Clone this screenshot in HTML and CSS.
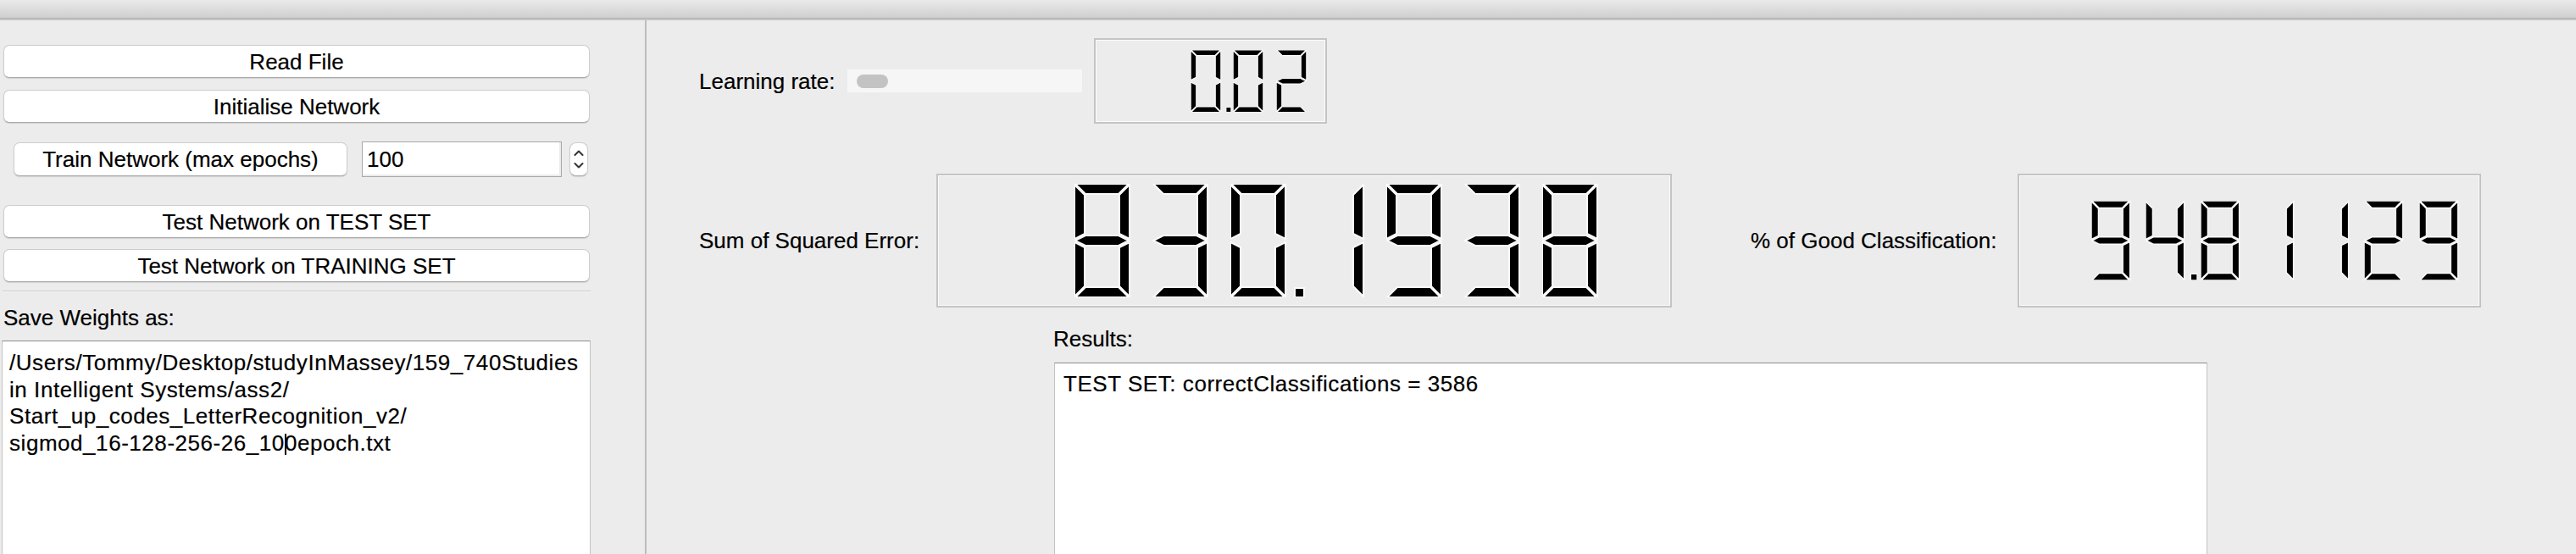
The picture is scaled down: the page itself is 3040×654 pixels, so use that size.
FILE: index.html
```html
<!DOCTYPE html>
<html>
<head>
<meta charset="utf-8">
<link rel="stylesheet" href="styles.css">
</head>
<body>
<svg class="defs" width="0" height="0" aria-hidden="true">
  <defs>
    <polygon id="sa" class="seg" points="1,0 64,0 52,12 13,12"/>
    <polygon id="sb" class="seg" points="65,1 65,65 53,59 53,13"/>
    <polygon id="sc" class="seg" points="65,69 65,133 53,121 53,75"/>
    <polygon id="sd" class="seg" points="1,134 64,134 52,122 13,122"/>
    <polygon id="se" class="seg" points="0,69 12,75 12,121 0,133"/>
    <polygon id="sf" class="seg" points="0,1 12,13 12,59 0,65"/>
    <polygon id="sg" class="seg" points="1,67 13,61 52,61 64,67 52,73 13,73"/>
    <rect id="dp" class="seg" x="76" y="123" width="11" height="11"/>
    <g id="d0"><use href="#sa"/><use href="#sb"/><use href="#sc"/><use href="#sd"/><use href="#se"/><use href="#sf"/></g>
    <g id="d1"><use href="#sb"/><use href="#sc"/></g>
    <g id="d2"><use href="#sa"/><use href="#sb"/><use href="#sg"/><use href="#se"/><use href="#sd"/></g>
    <g id="d3"><use href="#sa"/><use href="#sb"/><use href="#sg"/><use href="#sc"/><use href="#sd"/></g>
    <g id="d4"><use href="#sf"/><use href="#sg"/><use href="#sb"/><use href="#sc"/></g>
    <g id="d8"><use href="#sa"/><use href="#sb"/><use href="#sc"/><use href="#sd"/><use href="#se"/><use href="#sf"/><use href="#sg"/></g>
    <g id="d9"><use href="#sa"/><use href="#sb"/><use href="#sc"/><use href="#sd"/><use href="#sf"/><use href="#sg"/></g>
  </defs>
</svg>

<div class="titlebar"></div>

<div class="main">
  <div class="left">
    <button class="btn btn-wide">Read File</button>
    <button class="btn btn-wide btn-gap">Initialise Network</button>
    <div class="train-row">
      <button class="btn btn-train">Train Network (max epochs)</button>
      <div class="spin-input">100</div>
      <div class="spinner">
        <svg viewBox="0 0 22 40" class="spin-icon">
          <polyline points="6,14.5 11,9.5 16,14.5"/>
          <polyline points="6,25.5 11,30.5 16,25.5"/>
        </svg>
      </div>
    </div>
    <button class="btn btn-wide btn-test">Test Network on TEST SET</button>
    <button class="btn btn-wide btn-gap2">Test Network on TRAINING SET</button>
    <div class="sep"></div>
    <div class="label save-label">Save Weights as:</div>
    <div class="textbox path-box">/Users/Tommy/Desktop/studyInMassey/159_740Studies<br>in Intelligent Systems/ass2/<br>Start_up_codes_LetterRecognition_v2/<br>sigmod_16-128-256-26_10<span class="caret"></span>0epoch.txt</div>
  </div>

  <div class="right">
    <div class="row row-lr">
      <div class="label lbl-lr">Learning rate:</div>
      <div class="slider"><div class="handle"></div></div>
      <div class="lcd lcd-small">
        <svg class="cell" viewBox="0 0 92 134"><use href="#d0"/><use href="#dp"/></svg>
        <svg class="cell" viewBox="0 0 92 134"><use href="#d0"/></svg>
        <svg class="cell" viewBox="0 0 92 134"><use href="#d2"/></svg>
      </div>
    </div>

    <div class="row row-stats">
      <div class="label lbl-sse">Sum of Squared Error:</div>
      <div class="lcd lcd-big">
        <svg class="cell" viewBox="0 0 92 134"><use href="#d8"/></svg>
        <svg class="cell" viewBox="0 0 92 134"><use href="#d3"/></svg>
        <svg class="cell" viewBox="0 0 92 134"><use href="#d0"/><use href="#dp"/></svg>
        <svg class="cell" viewBox="0 0 92 134"><use href="#d1"/></svg>
        <svg class="cell" viewBox="0 0 92 134"><use href="#d9"/></svg>
        <svg class="cell" viewBox="0 0 92 134"><use href="#d3"/></svg>
        <svg class="cell" viewBox="0 0 92 134"><use href="#d8"/></svg>
      </div>
      <div class="label lbl-pct">% of Good Classification:</div>
      <div class="lcd lcd-mid">
        <svg class="cell" viewBox="0 0 92 134"><use href="#d9"/></svg>
        <svg class="cell" viewBox="0 0 92 134"><use href="#d4"/><use href="#dp"/></svg>
        <svg class="cell" viewBox="0 0 92 134"><use href="#d8"/></svg>
        <svg class="cell" viewBox="0 0 92 134"><use href="#d1"/></svg>
        <svg class="cell" viewBox="0 0 92 134"><use href="#d1"/></svg>
        <svg class="cell" viewBox="0 0 92 134"><use href="#d2"/></svg>
        <svg class="cell" viewBox="0 0 92 134"><use href="#d9"/></svg>
      </div>
    </div>

    <div class="results">
      <div class="label results-label">Results:</div>
      <div class="textbox results-box">TEST SET: correctClassifications = 3586</div>
    </div>
  </div>
</div>
</body>
</html>
```

FILE: styles.css
```css
html, body {
  margin: 0;
  padding: 0;
}
body {
  width: 3040px;
  height: 654px;
  overflow: hidden;
  background: #ececec;
  font-family: "Liberation Sans", Arial, sans-serif;
  font-size: 26px;
  color: #000;
  -webkit-text-stroke: 0.2px #000;
}
.defs {
  display: block;
  width: 0;
  height: 0;
  overflow: hidden;
}
.seg {
  fill: #000;
  stroke: #fbfbfb;
  stroke-width: 2;
  stroke-linejoin: miter;
}

.titlebar {
  height: 24px;
  background: linear-gradient(to bottom,
    #eaeaea 0, #cfcfcf 21px,
    #b1b1b1 21px, #b1b1b1 22px,
    #c6c6c6 22px, #c6c6c6 24px);
}

.main {
  display: flex;
  height: 630px;
  overflow: hidden;
}

/* ---------- left panel ---------- */
.left {
  box-sizing: border-box;
  width: 763px;
  flex: none;
  border-right: 2px solid #bdbdbd;
  padding: 29px 64px 0 3px;
  display: flex;
  flex-direction: column;
  overflow: hidden;
}
.btn {
  box-sizing: border-box;
  font-family: inherit;
  font-size: 26px;
  color: #000;
  background: #fff;
  border: 1px solid #cdcdcd;
  border-bottom-color: #aaaaaa;
  border-radius: 7px;
  box-shadow: 0 1px 1px rgba(0,0,0,0.12);
  padding: 0;
  line-height: 1;
  display: flex;
  align-items: center;
  justify-content: center;
}
.btn-wide {
  height: 39px;
  margin: 0 1px;
  flex: none;
}
.btn-gap { margin-top: 14px; }
.btn-test { margin-top: 33px; }
.btn-gap2 { margin-top: 13px; }

.train-row {
  margin-top: 22px;
  height: 42px;
  display: flex;
  align-items: center;
  flex: none;
}
.btn-train {
  width: 394px;
  height: 40px;
  margin-left: 13px;
}
.spin-input {
  box-sizing: border-box;
  width: 236px;
  height: 42px;
  margin-left: 17px;
  background: #fff;
  border: 1px solid #a9a9a9;
  box-shadow: inset -2px -2px 0 #ebebeb;
  padding: 0 5px;
  line-height: 40px;
}
.spinner {
  box-sizing: border-box;
  width: 22px;
  height: 40px;
  margin-left: 9px;
  background: #fff;
  border: 1px solid #cfcfcf;
  border-bottom-color: #adadad;
  border-radius: 8px;
  box-shadow: 0 1px 1px rgba(0,0,0,0.12);
  display: flex;
}
.spin-icon {
  width: 20px;
  height: 38px;
}
.spin-icon polyline {
  fill: none;
  stroke: #333;
  stroke-width: 2.2;
  stroke-linecap: round;
  stroke-linejoin: round;
}

.sep {
  margin-top: 10px;
  height: 1px;
  background: #cccccc;
  border-bottom: 1px solid #f6f6f6;
  flex: none;
}
.label {
  line-height: 30px;
  white-space: nowrap;
}
.save-label {
  margin-top: 15px;
  padding-left: 1px;
}
.textbox {
  box-sizing: border-box;
  background: #fff;
  border: 1px solid #c3c3c3;
  border-top-color: #8d8d8d;
  line-height: 31.6px;
  white-space: nowrap;
  letter-spacing: 0.55px;
}
.path-box {
  margin-top: 12px;
  margin-left: -1px;
  height: 420px;
  flex: none;
  padding: 10px 8px;
}
.caret {
  display: inline-block;
  width: 0;
  height: 25px;
  border-left: 2px solid #000;
  vertical-align: -5px;
  margin-right: -2px;
}

/* ---------- right panel ---------- */
.right {
  flex: 1;
  padding: 21px 0 0 62px;
  display: flex;
  flex-direction: column;
}
.row {
  display: flex;
  align-items: center;
  flex: none;
}
.row-lr { height: 101px; }
.lbl-lr { width: 175px; }
.slider {
  box-sizing: border-box;
  width: 277px;
  height: 27px;
  background: #f6f6f6;
  padding-left: 11px;
  display: flex;
  align-items: center;
  margin-right: 14px;
}
.handle {
  width: 37px;
  height: 16px;
  border-radius: 8px;
  background: #c3c3c3;
}

.row-stats {
  margin-top: 59px;
  height: 158px;
}
.lbl-sse { width: 280px; }
.lbl-pct {
  width: 315px;
  margin-left: 93px;
}

.lcd {
  box-sizing: border-box;
  display: flex;
  align-items: center;
  justify-content: flex-end;
  border: 2px solid #c4c4c4;
  box-shadow: inset 0 0 0 1px #fbfbfb;
  flex: none;
}
.lcd-small {
  width: 275px;
  height: 101px;
  padding-right: 7px;
}
.lcd-small .cell { width: 50.8px; height: 73.5px; }
.lcd-big {
  width: 868px;
  height: 158px;
  padding-right: 59px;
}
.lcd-big .cell { width: 92px; height: 134px; }
.lcd-mid {
  width: 547px;
  height: 158px;
  padding-right: 7px;
}
.lcd-mid .cell { width: 64.5px; height: 94px; }
.cell {
  display: block;
  flex: none;
}

.results {
  margin-top: 22px;
  display: flex;
  flex-direction: column;
  flex: none;
}
.results-label { margin-left: 418px; }
.results-box {
  margin-top: 13px;
  margin-left: 419px;
  width: 1361px;
  height: 400px;
  padding: 9px 10px;
}
```
